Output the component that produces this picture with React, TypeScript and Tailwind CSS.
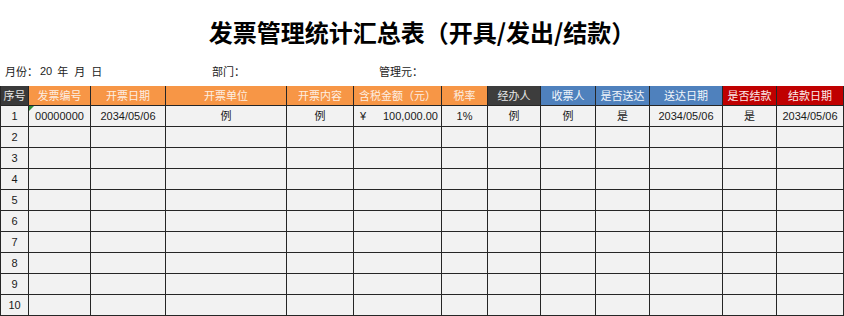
import React from 'react';

type Col = { label: string; w: string; bg: string; fg: string };

const cols: Col[] = [
  { label: '序号', w: 'w-[29px]', bg: 'bg-[#3a3a3a]', fg: 'text-[#e8e8e8]' },
  { label: '发票编号', w: 'w-[62px]', bg: 'bg-[#f79646]', fg: 'text-[#fdeee2]' },
  { label: '开票日期', w: 'w-[75px]', bg: 'bg-[#f79646]', fg: 'text-[#fdeee2]' },
  { label: '开票单位', w: 'w-[121px]', bg: 'bg-[#f79646]', fg: 'text-[#fdeee2]' },
  { label: '开票内容', w: 'w-[67px]', bg: 'bg-[#f79646]', fg: 'text-[#fdeee2]' },
  { label: '含税金额（元）', w: 'w-[88px]', bg: 'bg-[#f79646]', fg: 'text-[#fdeee2]' },
  { label: '税率', w: 'w-[46px]', bg: 'bg-[#f79646]', fg: 'text-[#fdeee2]' },
  { label: '经办人', w: 'w-[53px]', bg: 'bg-[#3d3d3d]', fg: 'text-[#e8e8e8]' },
  { label: '收票人', w: 'w-[55px]', bg: 'bg-[#4f81bd]', fg: 'text-[#f2f6fb]' },
  { label: '是否送达', w: 'w-[54px]', bg: 'bg-[#4f81bd]', fg: 'text-[#f2f6fb]' },
  { label: '送达日期', w: 'w-[73px]', bg: 'bg-[#4f81bd]', fg: 'text-[#f2f6fb]' },
  { label: '是否结款', w: 'w-[54px]', bg: 'bg-[#c00000]', fg: 'text-[#fbeaea]' },
  { label: '结款日期', w: 'w-[67px]', bg: 'bg-[#c00000]', fg: 'text-[#fbeaea]' },
];

const firstRow = ['1', '00000000', '2034/05/06', '例', '例', '', '1%', '例', '例', '是', '2034/05/06', '是', '2034/05/06'];

const cjk = { fontFamily: '"Noto Sans CJK SC", "Liberation Sans", sans-serif' };
const body = { fontFamily: '"Liberation Sans", "Noto Sans CJK SC", sans-serif' };

const App: React.FC = () => {
  const rows = Array.from({ length: 10 }, (_, i) => i + 1);

  return (
    <div className="w-[844px] h-[316px] overflow-hidden bg-white text-[#1a1a1a]">
      {/* 标题 */}
      <div className="pt-[17px] h-[47px] text-center">
        <h1 className="text-[24px] leading-[30px] font-bold text-black pl-[0px]" style={cjk}>
          发票管理统计汇总表（开具/发出/结款）
        </h1>
      </div>

      {/* 信息行 */}
      <div className="h-[39px] pt-[9px] flex items-center text-[11px] text-[#222]" style={cjk}>
        <div className="w-[212px] pl-[5px] flex items-center">
          <span>月份：</span>
          <span className="ml-[2px]" style={body}>20</span>
          <span className="ml-[5px]">年</span>
          <span className="ml-[6px]">月</span>
          <span className="ml-[6px]">日</span>
        </div>
        <div className="w-[167px]">部门：</div>
        <div>管理元：</div>
      </div>

      {/* 表头 */}
      <div className="flex">
        {cols.map((c, i) => (
          <div
            key={c.label}
            className={`${c.w} ${c.bg} ${c.fg} h-[20px] shrink-0 flex items-center justify-center text-[11px] border-r border-b border-[#262626] ${i === 0 ? 'border-l' : ''}`}
            style={cjk}
          >
            {c.label}
          </div>
        ))}
      </div>

      {/* 表体 */}
      {rows.map((r) => (
        <div key={r} className="flex">
          {cols.map((c, i) => {
            let content: React.ReactNode = i === 0 ? String(r) : '';
            if (r === 1) content = firstRow[i];
            const isAmount = r === 1 && i === 5;
            return (
              <div
                key={c.label}
                className={`${c.w} relative h-[21px] shrink-0 bg-[#f2f2f2] flex items-center justify-center text-[11px] border-r border-b border-[#262626] ${i === 0 ? 'border-l' : ''}`}
                style={body}
              >
                {r === 1 && i === 1 && (
                  <div className="absolute left-0 top-0 w-0 h-0 border-t-[5px] border-t-[#2e8b3a] border-r-[5px] border-r-transparent" />
                )}
                {isAmount ? (
                  <div className="w-full flex justify-between pl-[6px] pr-[3px]">
                    <span>¥</span>
                    <span>100,000.00</span>
                  </div>
                ) : (
                  content
                )}
              </div>
            );
          })}
        </div>
      ))}
    </div>
  );
};

export default App;
